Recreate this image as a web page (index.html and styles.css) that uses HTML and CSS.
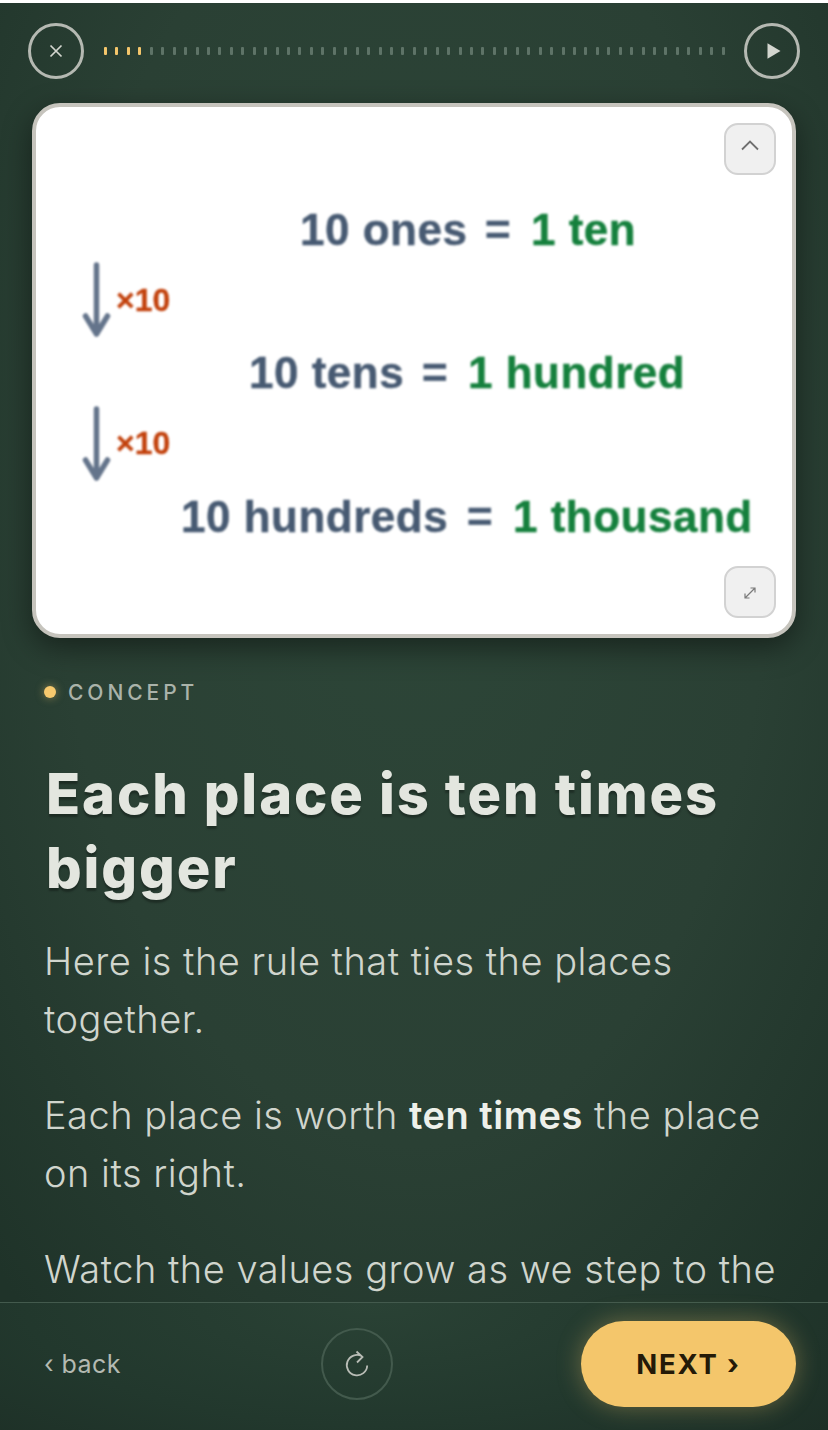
FILE: index.html
```html
<!DOCTYPE html>
<html lang="en">
<head>
<meta charset="utf-8">
<title>Each place is ten times bigger</title>
<link rel="stylesheet" href="styles.css">
</head>
<body>
<main class="screen">
  <header class="topbar">
    <button class="round-btn" aria-label="Close">
      <svg width="16" height="16" viewBox="0 0 16 16"><path d="M2.500 2.500l11 11M13.500 2.500l-11 11" stroke="#d3d6cf" stroke-width="1.700" fill="none"/></svg>
    </button>
    <div class="ticks">
      <i class="tick on"></i><i class="tick on"></i><i class="tick on"></i><i class="tick on"></i>
      <i class="tick"></i><i class="tick"></i><i class="tick"></i><i class="tick"></i><i class="tick"></i><i class="tick"></i><i class="tick"></i><i class="tick"></i><i class="tick"></i><i class="tick"></i><i class="tick"></i><i class="tick"></i><i class="tick"></i><i class="tick"></i><i class="tick"></i><i class="tick"></i><i class="tick"></i><i class="tick"></i><i class="tick"></i><i class="tick"></i><i class="tick"></i><i class="tick"></i><i class="tick"></i><i class="tick"></i><i class="tick"></i><i class="tick"></i><i class="tick"></i><i class="tick"></i><i class="tick"></i><i class="tick"></i><i class="tick"></i><i class="tick"></i><i class="tick"></i><i class="tick"></i><i class="tick"></i><i class="tick"></i><i class="tick"></i><i class="tick"></i><i class="tick"></i><i class="tick"></i><i class="tick"></i><i class="tick"></i><i class="tick"></i><i class="tick"></i><i class="tick"></i><i class="tick"></i><i class="tick"></i><i class="tick"></i><i class="tick"></i><i class="tick"></i><i class="tick"></i>
    </div>
    <button class="round-btn play" aria-label="Play">
      <svg width="14" height="16" viewBox="0 0 14 16"><path d="M0.500 0.200L13.500 8L0.500 15.800Z" fill="#d3d6cf"/></svg>
    </button>
  </header>

  <section class="card">
    <svg class="diagram" width="756" height="527" viewBox="0 0 756 527">
      <g class="eq">
        <text x="264" y="138" class="lhs">10 ones</text><text x="449" y="138" class="lhs">=</text><text x="495" y="138" class="rhs">1 ten</text>
        <text x="213" y="281" class="lhs">10 tens</text><text x="386" y="281" class="lhs">=</text><text x="432" y="281" class="rhs">1 hundred</text>
        <text x="145" y="425" class="lhs">10 hundreds</text><text x="431" y="425" class="lhs">=</text><text x="477" y="425" class="rhs">1 thousand</text>
      </g>
      <g class="arrow">
        <path d="M60.500 158V227M49.500 209L60.500 227L71.500 209"/>
        <path d="M60.500 302V371M49.500 353L60.500 371L71.500 353"/>
      </g>
      <text x="80" y="204" class="times">×10</text>
      <text x="80" y="347" class="times">×10</text>
    </svg>
    <button class="card-btn card-btn-top" aria-label="Collapse">
      <svg width="20" height="12" viewBox="0 0 20 12"><path d="M2 10.500L10 2.500L18 10.500" stroke="#6f6f6f" stroke-width="1.800" fill="none"/></svg>
    </button>
    <button class="card-btn card-btn-bottom" aria-label="Expand">
      <svg width="14" height="14" viewBox="0 0 14 14"><path d="M2 12L12 2M7.500 2H12V6.500M2 7.500V12H6.500" stroke="#7a7a7a" stroke-width="1.200" fill="none"/></svg>
    </button>
  </section>

  <div class="label"><span class="dot"></span>CONCEPT</div>

  <article class="lesson">
    <h1>Each place is ten times bigger</h1>
    <p>Here is the rule that ties the places together.</p>
    <p>Each place is worth <strong>ten times</strong> the place on its right.</p>
    <p>Watch the values grow as we step to the left.</p>
  </article>

  <footer class="footer">
    <a class="back">‹ back</a>
    <button class="replay" aria-label="Replay">
      <svg width="26" height="28" viewBox="0 0 26 28"><path d="M23.200 15.500A10.200 10.200 0 1 1 18 6.300M12.500 1.500L18.500 7L13 12.500" stroke="#b9bdb6" stroke-width="1.800" fill="none"/></svg>
    </button>
    <button class="next">NEXT ›</button>
  </footer>
</main>
</body>
</html>
```
FILE: styles.css
```css
* { box-sizing: border-box; }
html, body { margin: 0; height: 100%; background: #fff; }
body { padding-top: 3px; overflow: hidden; }
button { padding: 0; margin: 0; cursor: pointer; font: inherit; }

.screen {
  position: relative;
  width: 828px;
  height: 1427px;
  overflow: hidden;
  display: flex;
  flex-direction: column;
  font-family: Inter, "Liberation Sans", sans-serif;
  background: radial-gradient(ellipse 72% 75% at 50% 35%, #2d4638 0%, #2a4034 60%, #1f3329 100%);
}

.topbar {
  display: flex;
  align-items: center;
  height: 100px;
  flex: none;
  padding: 0 28px 4px;
}
.round-btn {
  width: 56px;
  height: 56px;
  flex: none;
  display: flex;
  align-items: center;
  justify-content: center;
  border: 3px solid #b5b9b2;
  border-radius: 50%;
  background: transparent;
}
.play { padding-left: 3px; }
.ticks {
  flex: 1;
  display: flex;
  justify-content: space-between;
  margin: 0 19px 0 20px;
  padding-bottom: 1px;
}
.tick { display: block; width: 3px; height: 8px; border-radius: 1px; background: #5e7367; }
.tick.on { background: #f4c66b; }

.card {
  position: relative;
  flex: none;
  width: 764px;
  height: 535px;
  margin-left: 32px;
  background: #fff;
  border: 4px solid #c6c4bd;
  border-radius: 28px;
  box-shadow: 0 10px 30px rgba(0,0,0,.45);
}
.diagram { display: block; filter: blur(.8px); }
.eq text {
  font-family: "Liberation Sans", Arial, sans-serif;
  font-weight: 700;
  font-size: 44px;
  letter-spacing: .5px;
  stroke-width: .4px;
}
.lhs { fill: #475a72; stroke: #475a72; }
.rhs { fill: #15803d; stroke: #15803d; }
.times { font-family: "Liberation Sans", Arial, sans-serif; font-weight: 700; font-size: 32px; fill: #c2410c; stroke: #c2410c; stroke-width: .3px; }
.arrow path { fill: none; stroke: #64748b; stroke-width: 5.500; stroke-linecap: round; stroke-linejoin: round; }

.card-btn {
  position: absolute;
  right: 16px;
  width: 52px;
  height: 52px;
  display: flex;
  align-items: center;
  justify-content: center;
  background: #f0f0f0;
  border: 2px solid #d2d2d2;
  border-radius: 14px;
}
.card-btn-top { top: 16px; padding-bottom: 8px; }
.card-btn-bottom { bottom: 16px; padding-top: 2px; }

.label {
  display: flex;
  align-items: center;
  margin: 43px 0 0 44px;
  color: #aab3aa;
  font-size: 21px;
  font-weight: 500;
  letter-spacing: 3.950px;
  line-height: 24px;
}
.dot {
  width: 12px;
  height: 12px;
  margin: 0 12px 2px 0;
  border-radius: 50%;
  background: #f7c96e;
  box-shadow: 0 0 8px rgba(247,201,110,.5);
}

.lesson { padding: 0 40px 0 44px; margin-top: 52px; }
h1 {
  margin: 0 0 27px 2px;
  font-family: Inter, "Liberation Sans", sans-serif;
  font-weight: 800;
  font-size: 56px;
  line-height: 74px;
  letter-spacing: 1.900px;
  color: #e3e6df;
  text-shadow: 0 3px 2px rgba(0,0,0,.3);
}
p {
  margin: 0 0 38px;
  font-size: 38px;
  font-weight: 300;
  line-height: 58px;
  letter-spacing: .5px;
  color: #d0d5cd;
}
strong { font-weight: 600; color: #eef0ea; }

.footer {
  position: absolute;
  left: 0;
  right: 0;
  bottom: 0;
  height: 128px;
  display: flex;
  align-items: center;
  justify-content: space-between;
  padding: 0 32px 6px 44px;
  border-top: 1px solid #435a4d;
  background: radial-gradient(ellipse 70% 160% at 45% 0%, #2a4235 0%, #22382d 60%, #1d2f26 100%);
}
.back { color: #b4bab2; font-size: 25px; font-weight: 400; letter-spacing: .45px; }
.replay {
  width: 72px;
  height: 72px;
  margin-left: 12px;
  display: flex;
  align-items: center;
  justify-content: center;
  background: transparent;
  border: 2px solid #435a4d;
  border-radius: 50%;
}
.next {
  width: 215px;
  height: 86px;
  border: 0;
  border-radius: 43px;
  background: #f4c66b;
  color: #241a08;
  font-family: Inter, "Liberation Sans", sans-serif;
  font-size: 27.500px;
  font-weight: 700;
  letter-spacing: 1.800px;
  box-shadow: 0 0 24px rgba(244,198,107,.35);
}
```
